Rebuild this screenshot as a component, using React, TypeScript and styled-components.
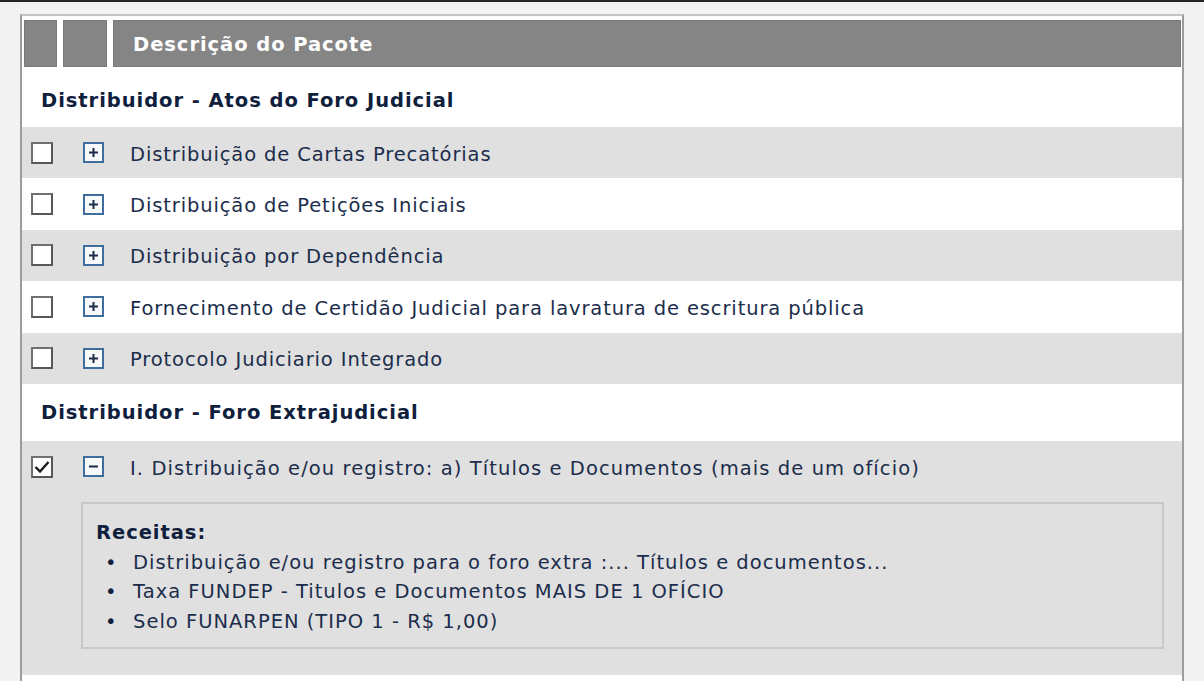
import styled, { createGlobalStyle } from "styled-components";

const GlobalStyle = createGlobalStyle`
  html, body {
    margin: 0;
    padding: 0;
    background: #f2f2f2;
    overflow: hidden;
  }
  body {
    border-top: 2px solid #242424;
    font-family: "DejaVu Sans", Verdana, sans-serif;
    color: #1b2d4b;
  }
`;

const Panel = styled.div`
  margin: 12px 0 0 20px;
  width: 1160px;
  min-height: 670px;
  background: #fff;
  border: 2px solid #9c9c9c;
  border-top-color: #c4c4c4;
  border-bottom: none;
`;

const HeaderRow = styled.div`
  display: grid;
  grid-template-columns: 33px 44px 1fr;
  gap: 6px;
  padding: 4px 1px 0 2px;
`;

const HeaderCell = styled.div`
  height: 47px;
  box-sizing: border-box;
  background: #858585;
  border: 1px solid #7a7a7a;
  display: flex;
  align-items: center;
  padding: 2px 0 0 19px;
  color: #fff;
  font-weight: bold;
  font-size: 19.5px;
  letter-spacing: 0.95px;
`;

const GroupTitle = styled.div<{ $h: number; $pt: number }>`
  height: ${(p) => p.$h}px;
  box-sizing: border-box;
  padding-top: ${(p) => p.$pt}px;
  display: flex;
  align-items: center;
  padding-left: 19px;
  font-weight: bold;
  font-size: 19.5px;
  letter-spacing: 0.95px;
  color: #0f203d;
  background: #fff;
`;

const Row = styled.div<{ $alt: boolean }>`
  background: ${(p) => (p.$alt ? "#e0e0e0" : "#fff")};
`;

const RowLine = styled.div`
  height: 51.4px;
  display: flex;
  align-items: center;
  font-size: 19.5px;
`;

const Label = styled.span<{ $wide?: boolean }>`
  padding-top: 3px;
  letter-spacing: ${(p) => (p.$wide ? "1.08px" : "0.88px")};
`;

const Check = styled.span`
  width: 22px;
  height: 22px;
  flex: none;
  box-sizing: border-box;
  margin-left: 9px;
  border: 2px solid #707070;
  border-right-color: #575757;
  border-bottom-color: #575757;
  background: #fff;
  display: inline-flex;
  align-items: center;
  justify-content: center;
`;

const Toggle = styled.span`
  width: 21px;
  height: 21px;
  flex: none;
  box-sizing: border-box;
  margin-left: 30px;
  margin-right: 26px;
  border: 2px solid #3f6d9c;
  background: #f7f9fb;
  display: inline-flex;
  align-items: center;
  justify-content: center;
`;

const Detail = styled.div`
  padding: 10px 18px 26px 59px;
`;

const Box = styled.div`
  border: 2px solid #c8c8c8;
  padding: 14px 12px 11px 13px;
  font-size: 19.5px;
  line-height: 29.5px;
  letter-spacing: 1px;
`;

const BoxTitle = styled.div`
  font-weight: bold;
  color: #0f203d;
  letter-spacing: 0.95px;
`;

const List = styled.ul`
  margin: 0;
  padding-left: 9px;
  list-style: none;

  li::before {
    content: "•";
    display: inline-block;
    width: 28px;
    color: #0f203d;
  }
`;

const rows1 = [
  "Distribuição de Cartas Precatórias",
  "Distribuição de Petições Iniciais",
  "Distribuição por Dependência",
  "Fornecimento de Certidão Judicial para lavratura de escritura pública",
  "Protocolo Judiciario Integrado",
];

const receitas = [
  "Distribuição e/ou registro para o foro extra :... Títulos e documentos...",
  "Taxa FUNDEP - Titulos e Documentos MAIS DE 1 OFÍCIO",
  "Selo FUNARPEN (TIPO 1 - R$ 1,00)",
];

function ToggleIcon({ open }: { open: boolean }) {
  return (
    <Toggle>
      <svg width="11" height="11" viewBox="0 0 11 11">
        <path d="M1 5.5h9" stroke="#1b2d4b" strokeWidth="2" />
        {!open && <path d="M5.5 1v9" stroke="#1b2d4b" strokeWidth="2" />}
      </svg>
    </Toggle>
  );
}

export default function App() {
  return (
    <>
      <GlobalStyle />
      <Panel>
        <HeaderRow>
          <HeaderCell />
          <HeaderCell />
          <HeaderCell>Descrição do Pacote</HeaderCell>
        </HeaderRow>
        <GroupTitle $h={60} $pt={6}>
          Distribuidor - Atos do Foro Judicial
        </GroupTitle>
        {rows1.map((r, i) => (
          <Row key={r} $alt={i % 2 === 0}>
            <RowLine>
              <Check />
              <ToggleIcon open={false} />
              <Label>{r}</Label>
            </RowLine>
          </Row>
        ))}
        <GroupTitle $h={57} $pt={1}>
          Distribuidor - Foro Extrajudicial
        </GroupTitle>
        <Row $alt>
          <RowLine>
            <Check>
              <svg width="16" height="14" viewBox="0 0 16 14">
                <path d="M1.5 7l4.5 4.5L14.5 2" fill="none" stroke="#1a1a1a" strokeWidth="2.4" />
              </svg>
            </Check>
            <ToggleIcon open />
            <Label $wide>
              I. Distribuição e/ou registro: a) Títulos e Documentos (mais de um ofício)
            </Label>
          </RowLine>
          <Detail>
            <Box>
              <BoxTitle>Receitas:</BoxTitle>
              <List>
                {receitas.map((t) => (
                  <li key={t}>{t}</li>
                ))}
              </List>
            </Box>
          </Detail>
        </Row>
      </Panel>
    </>
  );
}
